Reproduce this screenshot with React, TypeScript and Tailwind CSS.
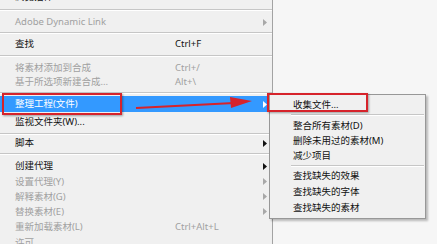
type Item = {
  label?: string;
  shortcut?: string;
  disabled?: boolean;
  arrow?: boolean;
  active?: boolean;
  sep?: boolean;
  h: string;
};

const mainItems: Item[] = [
  { label: "浏览插件...", h: "h-[16px]" },
  { sep: true, h: "h-[10px]" },
  { label: "Adobe Dynamic Link", disabled: true, arrow: true, h: "h-[14px]" },
  { sep: true, h: "h-[8px]" },
  { label: "查找", shortcut: "Ctrl+F", h: "h-[13px]" },
  { sep: true, h: "h-[11px]" },
  { label: "将素材添加到合成", shortcut: "Ctrl+/", disabled: true, h: "h-[14px]" },
  { label: "基于所选项新建合成...", shortcut: "Alt+\\", disabled: true, h: "h-[14px]" },
  { sep: true, h: "h-[7px]" },
  { label: "整理工程(文件)", active: true, arrow: true, h: "h-[16px]" },
  { label: "监视文件夹(W)...", h: "h-[19px]" },
  { sep: true, h: "h-[5px]" },
  { label: "脚本", arrow: true, h: "h-[14px]" },
  { sep: true, h: "h-[8px]" },
  { label: "创建代理", arrow: true, h: "h-[16px]" },
  { label: "设置代理(Y)", disabled: true, arrow: true, h: "h-[15px]" },
  { label: "解释素材(G)", disabled: true, arrow: true, h: "h-[15px]" },
  { label: "替换素材(E)", disabled: true, arrow: true, h: "h-[15px]" },
  { label: "重新加载素材(L)", shortcut: "Ctrl+Alt+L", disabled: true, h: "h-[16px]" },
  { label: "许可", disabled: true, h: "h-[15px]" },
];

const subItems: Item[] = [
  { label: "收集文件...", h: "h-[15px]" },
  { sep: true, h: "h-[6px]" },
  { label: "整合所有素材(D)", h: "h-[15px]" },
  { label: "删除未用过的素材(M)", h: "h-[15px]" },
  { label: "减少项目", h: "h-[15px]" },
  { sep: true, h: "h-[5px]" },
  { label: "查找缺失的效果", h: "h-[16px]" },
  { label: "查找缺失的字体", h: "h-[16px]" },
  { label: "查找缺失的素材", h: "h-[16px]" },
];

function Caret({ color }: { color: string }) {
  return (
    <svg width="4" height="7" viewBox="0 0 4 7" className="shrink-0">
      <polygon points="0,0 4,3.5 0,7" fill={color} />
    </svg>
  );
}

function Sep({ h, inset }: { h: string; inset?: boolean }) {
  return (
    <div className={`${h} flex items-center ${inset ? "pl-[21px] pr-[1px]" : ""}`}>
      <div className="w-full border-t border-[#c6c6c6] border-b border-b-white" />
    </div>
  );
}

export default function App() {
  const font = { fontFamily: '"Noto Sans", "Noto Sans CJK SC", sans-serif' };
  return (
    <div className="relative w-[437px] h-[244px] overflow-hidden bg-[#f6f6f6]" style={font}>
      {/* main menu */}
      <div className="-mt-[11px] w-[273px] border-r border-[#a3a3a3] bg-[#f0f0f0] text-[9.5px] leading-none">
        {mainItems.map((it, i) =>
          it.sep ? (
            <Sep key={i} h={it.h} />
          ) : (
            <div
              key={i}
              className={`${it.h} flex items-center pl-[15px] pr-[5px] ${
                it.active ? "bg-[#3399ff] text-white" : it.disabled ? "text-[#a0a0a0]" : "text-[#111]"
              }`}
            >
              <span className="w-[160px] whitespace-nowrap">{it.label}</span>
              <span className="flex-1 whitespace-nowrap">{it.shortcut}</span>
              {it.arrow && <Caret color={it.active ? "#fff" : it.disabled ? "#a8a8a8" : "#111"} />}
            </div>
          )
        )}
      </div>

      {/* submenu */}
      <div className="absolute left-[269px] top-[94px] w-[157px] border border-[#979797] bg-[#f0f0f0] py-[2px] text-[9.5px] leading-none text-[#111] shadow-[2px_2px_2px_rgba(0,0,0,0.25)]">
        {subItems.map((it, i) =>
          it.sep ? (
            <Sep key={i} h={it.h} inset />
          ) : (
            <div key={i} className={`${it.h} flex items-center pl-[23px] whitespace-nowrap`}>
              {it.label}
            </div>
          )
        )}
      </div>

      {/* annotations */}
      <div className="absolute left-[2px] top-[93px] w-[120px] h-[22px] border-[2.5px] border-[#d6232b] shadow-[1px_1px_2px_rgba(0,0,0,0.35)]" />
      <div className="absolute left-[267px] top-[93px] w-[101px] h-[19px] border-[2.5px] border-[#d6232b] shadow-[1px_1px_2px_rgba(0,0,0,0.35)]" />
      <svg className="absolute left-[130px] top-[94px]" width="125" height="18" viewBox="0 0 125 18">
        <line x1="6" y1="14" x2="104" y2="9" stroke="#d6232b" strokeWidth="2.2" />
        <polygon points="100,3 122,7 101,14" fill="#d6232b" />
      </svg>
    </div>
  );
}
